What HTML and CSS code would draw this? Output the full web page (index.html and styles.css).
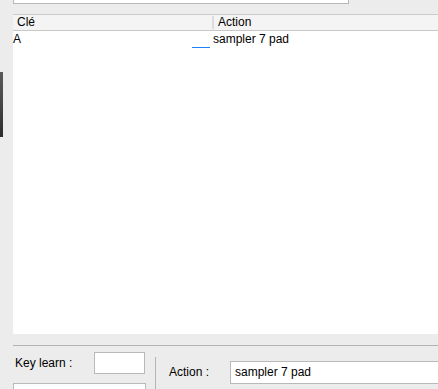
FILE: index.html
```html
<!DOCTYPE html>
<html>
  <head>
    <link rel="stylesheet" href="styles.css">
  </head>
<body>
  <!--edge of the window behind-->
  <div class="behind"></div>
  <div class="search"></div>
  <div class="table">
    <div class="thead">
      <div class="col key">Clé</div>
      <div class="col act">Action</div>
    </div>
    <div class="tbody">
      <div class="row">
        <div class="cell key">A<span class="edit"></span></div>
        <div class="cell act">sampler 7 pad</div>
      </div>
    </div>
  </div>
  <div class="panel">
    <div class="left">
      <div class="learn">
        <label>Key learn :</label>
        <div class="field small"></div>
      </div>
      <div class="field wide"></div>
    </div>
    <div class="sep"></div>
    <div class="right">
      <label>Action :</label>
      <div class="field big">sampler 7 pad</div>
    </div>
  </div>
</body>
</html>
```

FILE: styles.css
```css
body{
  margin: 0;
  width: 438px;
  height: 389px;
  overflow: hidden;
  background-color: #ececec;
  font-family: "Liberation Sans", Arial, sans-serif;
  font-size: 12px;
  color: #000;
}
.behind{
  position: absolute;
  left: 0;
  top: 72px;
  width: 3px;
  height: 65px;
  background: linear-gradient(#5a5a5a, #454545 50%, #2c2c2c);
}
.search{
  margin-left: 13px;
  width: 334px;
  height: 3px;
  background-color: #fff;
  border: 1px solid #b8b8b8;
  border-top: none;
}
.table{
  margin-left: 13px;
  margin-top: 10px;
  border-top: 1px solid #cbcbcb;
}
.thead{
  display: flex;
  height: 15px;
  background-color: #f4f4f4;
  border-bottom: 1px solid #c8c8c8;
}
.col{
  line-height: 15px;
}
.thead .key{
  width: 195px;
  padding-left: 4px;
  border-right: 2px solid #dcdcdc;
  margin: 1px 0;
  line-height: 13px;
}
.thead .act{
  padding-left: 4px;
}
.tbody{
  height: 303px;
  background-color: #fff;
}
.row{
  display: flex;
  height: 17px;
}
.cell{
  line-height: 17px;
}
.tbody .key{
  width: 200px;
  position: relative;
}
.edit{
  position: absolute;
  left: 179px;
  top: 16px;
  width: 18px;
  height: 1px;
  background-color: #1f7ff5;
}
.panel{
  display: flex;
  margin-top: 11px;
  margin-left: 13px;
  border-top: 1px solid #b4b4b4;
  height: 60px;
}
.left{
  flex-shrink: 0;
  width: 142px;
  padding-top: 6px;
}
.learn{
  display: flex;
  justify-content: space-between;
  align-items: center;
  padding-left: 2px;
  height: 21px;
}
.field{
  background-color: #fff;
  border: 1px solid #b9b9b9;
  box-sizing: border-box;
}
.small{
  width: 51px;
  height: 22px;
  margin-right: 10px;
}
.wide{
  margin-top: 10px;
  width: 133px;
  height: 22px;
}
.sep{
  flex-shrink: 0;
  width: 1px;
  margin-top: 11px;
  background-color: #b4b4b4;
}
.right{
  flex-shrink: 0;
  display: flex;
  align-items: center;
  padding-left: 13px;
  padding-top: 15px;
  height: 22px;
}
.right label{
  width: 61px;
}
.big{
  width: 215px;
  height: 23px;
  line-height: 21px;
  padding-left: 4px;
}
```
